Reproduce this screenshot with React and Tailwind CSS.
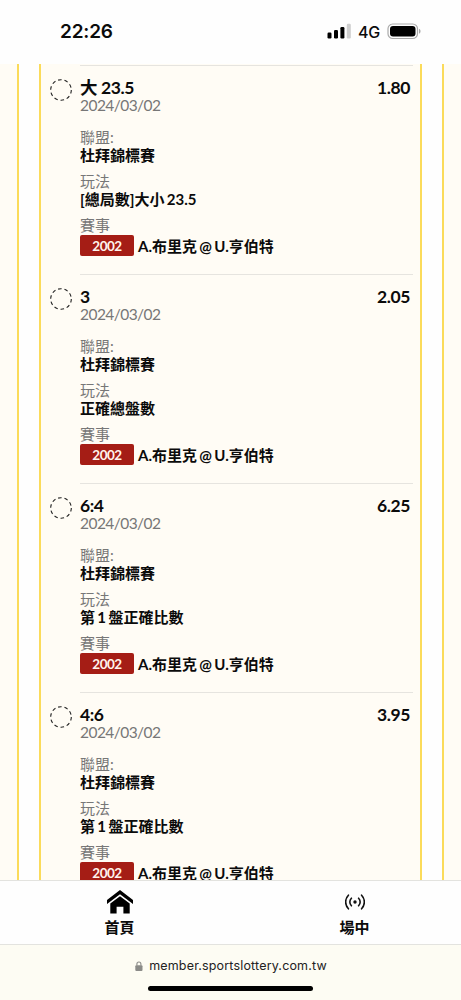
import { Fragment } from "react";

const bets = [
  { pick: "大 23.5", odds: "1.80", market: "[總局數]大小 23.5" },
  { pick: "3", odds: "2.05", market: "正確總盤數" },
  { pick: "6:4", odds: "6.25", market: "第 1 盤正確比數" },
  { pick: "4:6", odds: "3.95", market: "第 1 盤正確比數" },
];

function StatusBar() {
  return (
    <header className="flex h-16 shrink-0 items-start justify-between bg-[#fefefe] pl-[60px] pr-[41px] pt-[20px] font-['Inter','Liberation_Sans',sans-serif]">
      <span className="text-[19px] font-semibold leading-6 tracking-[-0.2px]">22:26</span>
      <div className="flex h-6 items-center">
        <svg width="25" height="16" viewBox="0 0 25 16" className="mt-[-2px]">
          <rect x="0.5" y="9.5" width="4" height="6" rx="1.2" />
          <rect x="7" y="7" width="4" height="8.5" rx="1.2" />
          <rect x="13.4" y="4" width="4" height="11.5" rx="1.2" />
          <rect x="19.8" y="0.8" width="4" height="14.7" rx="1.2" fill="#cfcfcf" />
        </svg>
        <span className="ml-[6px] w-[22px] whitespace-nowrap text-[16px] font-medium leading-6 tracking-[-0.3px]">4G</span>
        <svg width="35" height="17" viewBox="0 0 35 17" className="ml-[7px] mr-[-2px] mt-[-2px]">
          <rect x="1" y="1" width="29.5" height="14.5" rx="4.8" fill="none" stroke="#a9a9a9" strokeWidth="1.2" />
          <rect x="3" y="3" width="25.5" height="10.5" rx="3" />
          <path d="M32 5.8c2 .7 2 4.3 0 5z" fill="#a9a9a9" />
        </svg>
      </div>
    </header>
  );
}

function BetRow({ bet }) {
  const details = [
    { label: "聯盟:", value: "杜拜錦標賽" },
    { label: "玩法", value: bet.market },
  ];

  return (
    <li className="flex h-[209px] shrink-0">
      <svg width="22" height="22" viewBox="0 0 22 22" className="ml-[9px] mr-2 mt-[14px] shrink-0">
        <circle cx="11" cy="11" r="10.3" fill="none" stroke="#222" strokeWidth="1.1" strokeDasharray="3.6 2.87" />
      </svg>
      <div className="mr-[7px] flex-1 border-t border-[#e6e4df] pt-3">
        <div className="flex h-[18px] justify-between pr-[3px] text-[17.5px] font-bold leading-[19px] tracking-[-0.4px]">
          <span>{bet.pick}</span>
          <span>{bet.odds}</span>
        </div>
        <p className="text-[15.5px] leading-[18px] tracking-[-0.55px] text-[#777]">2024/03/02</p>
        <dl className="mt-[14px] text-[15px]">
          {details.map((d) => (
            <Fragment key={d.label}>
              <dt className="h-[18px] leading-[19px] text-[#777]">{d.label}</dt>
              <dd className="mb-[7px] h-[19px] font-bold leading-[19px] [word-spacing:-1.3px]">{d.value}</dd>
            </Fragment>
          ))}
          <dt className="h-[19px] leading-[19px] text-[#777]">賽事</dt>
          <dd className="flex items-start font-bold">
            <span className="mr-1 h-[21px] w-[54px] rounded-[2px] bg-[#a51d15] text-center text-[13.5px] leading-[22px] tracking-[-0.5px] text-[#fff4ed]">2002</span>
            <span className="leading-[23px] [word-spacing:-1.3px]">A.布里克 @ U.亨伯特</span>
          </dd>
        </dl>
      </div>
    </li>
  );
}

function HomeIcon() {
  return (
    <svg width="26" height="24" viewBox="0 0 26 24">
      <path d="M13 0 0 10v4L13 4.2 26 14v-4z" />
      <path d="M13 6.2 3.3 13.5V23.5h6.3V16.7h6.8v6.8h6.3V13.5z" />
    </svg>
  );
}

function LiveIcon() {
  return (
    <svg width="20" height="16" viewBox="0 0 20 16" fill="none" stroke="#111" strokeWidth="1.6" strokeLinecap="round">
      <circle cx="10" cy="8" r="1.7" fill="#111" stroke="none" />
      <path d="M6.4 4.2a5.4 5.4 0 0 0 0 7.6M13.6 4.2a5.4 5.4 0 0 1 0 7.6M3.4 1.2a9.8 9.8 0 0 0 0 13.6M16.6 1.2a9.8 9.8 0 0 1 0 13.6" />
    </svg>
  );
}

export default function App() {
  return (
    <div className="flex h-[1000px] w-[461px] flex-col overflow-hidden bg-[#fffcf5] font-['Lato','Noto_Sans_CJK_TC',sans-serif] text-[#0b0b0b]">
      <StatusBar />

      <main className="min-h-0 flex-1 px-[17px]">
        <div className="h-full border-x-2 border-[#fbdb5a] bg-[#fefefe] px-5">
          <ul className="flex h-full flex-col overflow-hidden border-x-2 border-[#fbdb5a] bg-[#fffcf5] pt-px">
            {bets.map((bet) => (
              <BetRow key={bet.pick} bet={bet} />
            ))}
          </ul>
        </div>
      </main>

      <nav className="flex h-[65px] shrink-0 border-y border-[#e3e3df] bg-[#fefefe] text-[15px] font-bold">
        <a className="flex w-[239px] flex-col items-center pt-[9px]">
          <HomeIcon />
          <span className="mt-[3px] leading-[20px]">首頁</span>
        </a>
        <a className="flex flex-1 flex-col items-center pl-[9px] pt-[13px]">
          <LiveIcon />
          <span className="mt-[7px] leading-[20px]">場中</span>
        </a>
      </nav>

      <footer className="flex h-[55px] shrink-0 flex-col items-center bg-[#fdfcf3] font-['Inter','Liberation_Sans',sans-serif]">
        <div className="ml-px mt-[11px] flex h-5 items-center text-[12.5px] tracking-[0.17px] text-[#222]">
          <svg width="8" height="10" viewBox="0 0 8 10" className="mr-[6px]" fill="#8b8b88">
            <rect x="0.3" y="4.2" width="7.2" height="5.8" rx="1" />
            <path d="M1.9 4.6V3a2 2 0 0 1 4 0v1.6" fill="none" stroke="#8b8b88" strokeWidth="1.1" />
          </svg>
          member.sportslottery.com.tw
        </div>
        <div className="mt-[10px] h-[5px] w-[165px] rounded-full bg-black" />
      </footer>
    </div>
  );
}
